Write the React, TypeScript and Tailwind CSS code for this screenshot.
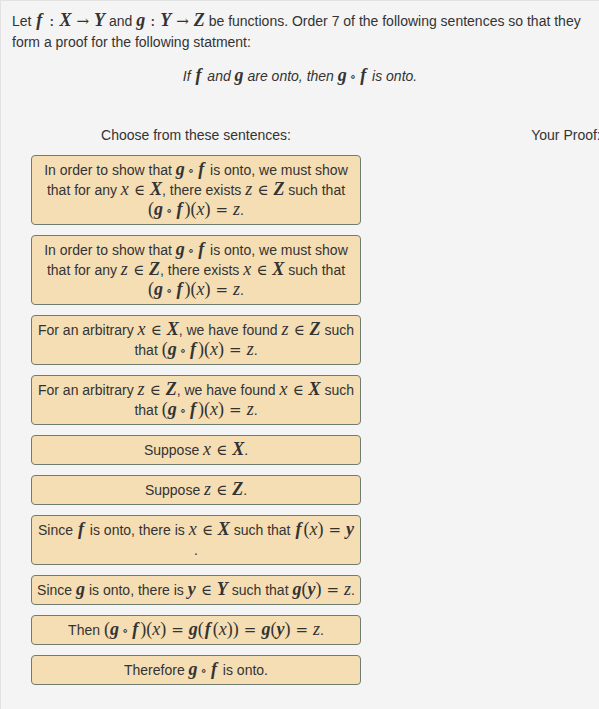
import type { ReactNode } from 'react';

// math pieces
function M({ children }: { children: ReactNode }) {
  return <span className="font-['Liberation_Serif','DejaVu_Serif',serif] text-[18px] leading-none">{children}</span>;
}
function V({ c }: { c: string }) {
  return <span className="italic">{c}</span>;
}
function B({ c }: { c: string }) {
  return <span className={`italic font-bold ${c === 'f' ? 'pl-[1px] pr-[2px]' : ''}`}>{c}</span>;
}
function R({ s }: { s: string }) {
  return <span className="mx-[5px] font-['DejaVu_Serif',serif] text-[15px]">{s}</span>;
}
function Op({ s }: { s: string }) {
  return <span className="mx-[3px] font-['DejaVu_Serif',serif] text-[13px]">{s}</span>;
}

const gof = (
  <>
    <B c="g" />
    <Op s="∘" />
    <B c="f" />
  </>
);
const gofx = (
  <>
    (<B c="g" />
    <Op s="∘" />
    <B c="f" />)(<V c="x" />)
    <R s="=" />
    <V c="z" />
  </>
);

function Card({ children }: { children: ReactNode }) {
  return (
    <div className="rounded-[4px] border border-[#6f7d70] bg-[#f5deb3] px-[5px] py-[4px] text-center text-[14px] leading-[20px] text-[#333]">
      {children}
    </div>
  );
}

const sentences: ReactNode[] = [
  <>
    In order to show that <M>{gof}</M> is onto, we must show that for any <M><V c="x" /><R s="∈" /><B c="X" /></M>, there exists{' '}
    <M><V c="z" /><R s="∈" /><B c="Z" /></M> such that <M>{gofx}</M>.
  </>,
  <>
    In order to show that <M>{gof}</M> is onto, we must show that for any <M><V c="z" /><R s="∈" /><B c="Z" /></M>, there exists{' '}
    <M><V c="x" /><R s="∈" /><B c="X" /></M> such that <M>{gofx}</M>.
  </>,
  <>
    For an arbitrary <M><V c="x" /><R s="∈" /><B c="X" /></M>, we have found <M><V c="z" /><R s="∈" /><B c="Z" /></M> such that{' '}
    <M>{gofx}</M>.
  </>,
  <>
    For an arbitrary <M><V c="z" /><R s="∈" /><B c="Z" /></M>, we have found <M><V c="x" /><R s="∈" /><B c="X" /></M> such that{' '}
    <M>{gofx}</M>.
  </>,
  <>
    Suppose <M><V c="x" /><R s="∈" /><B c="X" /></M>.
  </>,
  <>
    Suppose <M><V c="z" /><R s="∈" /><B c="Z" /></M>.
  </>,
  <>
    Since <M><B c="f" /></M> is onto, there is <M><V c="x" /><R s="∈" /><B c="X" /></M> such that{' '}
    <M><B c="f" />(<V c="x" />)<R s="=" /><B c="y" /></M>
    <br />.
  </>,
  <>
    Since <M><B c="g" /></M> is onto, there is <M><B c="y" /><R s="∈" /><B c="Y" /></M> such that{' '}
    <M><B c="g" />(<B c="y" />)<R s="=" /><V c="z" /></M>.
  </>,
  <>
    Then{' '}
    <M>
      (<B c="g" /><Op s="∘" /><B c="f" />)(<V c="x" />)<R s="=" /><B c="g" />(<B c="f" />(<V c="x" />))<R s="=" />
      <B c="g" />(<B c="y" />)<R s="=" /><V c="z" />
    </M>
    .
  </>,
  <>
    Therefore <M>{gof}</M> is onto.
  </>,
];

export default function App() {
  return (
    <div className="h-[709px] w-[599px] overflow-hidden border-l border-t border-[#e2e2e2] bg-[#f4f4f4] font-['Liberation_Sans',Arial,sans-serif] text-[14px] text-[#333]">
      <div className="pl-[11px] pr-[6px] pt-[10px] leading-[21px]">
        Let{' '}
        <M>
          <B c="f" /><R s=":" /><B c="X" /><R s="→" /><B c="Y" />
        </M>{' '}
        and{' '}
        <M>
          <B c="g" /><R s=":" /><B c="Y" /><R s="→" /><B c="Z" />
        </M>{' '}
        be functions. Order 7 of the following sentences so that they form a proof for the following statment:
      </div>
      <p className="mt-[13px] text-center italic leading-[21px]">
        If <M><B c="f" /></M> and <M><B c="g" /></M> are onto, then <M>{gof}</M> is onto.
      </p>

      <div className="mt-[38px] flex gap-[40px] pl-[30px]">
        <div className="w-[330px] shrink-0">
          <h2 className="mb-[10px] text-center leading-[20px]">Choose from these sentences:</h2>
          <div className="flex flex-col gap-[10px]">
            {sentences.map((s, i) => (
              <Card key={i}>{s}</Card>
            ))}
          </div>
        </div>
        <div className="w-[330px] shrink-0">
          <h2 className="mb-[10px] text-center leading-[20px]">Your Proof:</h2>
        </div>
      </div>
    </div>
  );
}
